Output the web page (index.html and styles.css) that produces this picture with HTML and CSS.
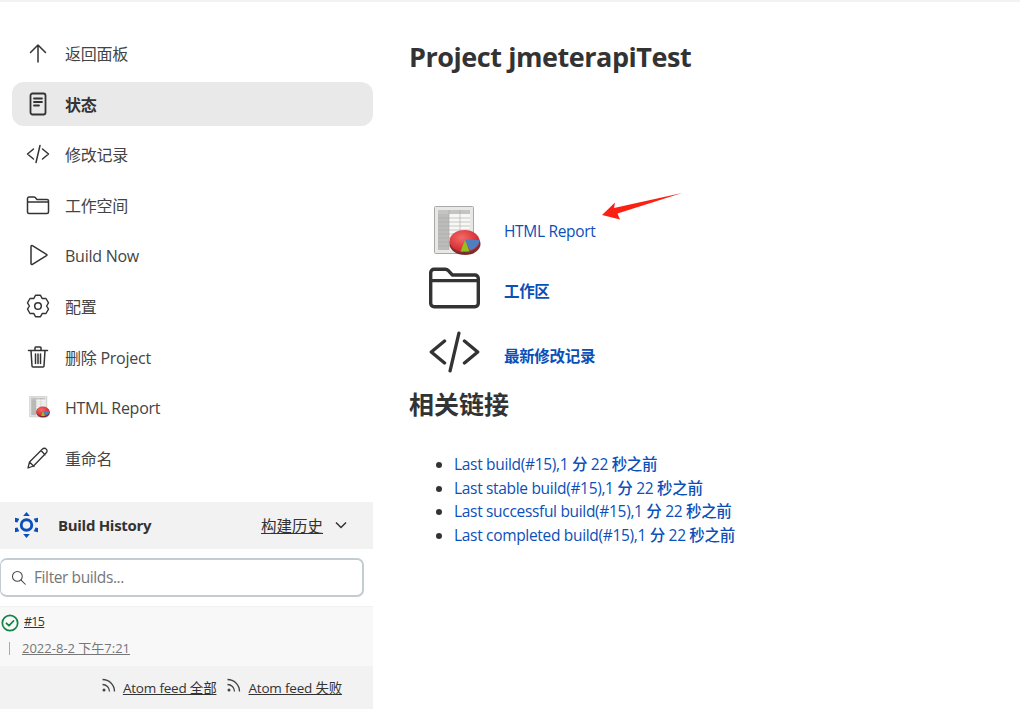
FILE: index.html
```html
<!DOCTYPE html>
<html lang="zh-CN">
<head>
    <meta charset="UTF-8">
    <title>jmeterapiTest [Jenkins]</title>
    <link rel="stylesheet" href="styles.css">
</head>
<body>
    <svg class="hidden-defs" width="0" height="0" aria-hidden="true">
        <defs>
            <radialGradient id="pie-red" cx="40%" cy="35%" r="70%">
                <stop offset="0" stop-color="#f26a6a"/>
                <stop offset="1" stop-color="#cf1f24"/>
            </radialGradient>
            <symbol id="report" viewBox="0 0 48 50">
                <rect x="0.500" y="0.500" width="39" height="47" rx="1" fill="#e8e8e6" stroke="#a9a9a7"/>
                <rect x="4" y="4" width="32" height="40" fill="#f7f7f5"/>
                <rect x="4" y="4" width="11" height="40" fill="#bcbcba"/>
                <rect x="4" y="4" width="32" height="4" fill="#c4c4c2"/>
                <g stroke="#aaaaa8" stroke-width=".6">
                    <path d="M4 12h32M4 16h32M4 20h32M4 24h32M4 28h32M4 32h32M4 36h32M4 40h32"/>
                    <path d="M15 4v40M26 4v40"/>
                </g>
                <ellipse cx="31" cy="38" rx="15.500" ry="11" fill="#6e1c1c" opacity=".9"/>
                <ellipse cx="30.500" cy="35" rx="15" ry="11" fill="url(#pie-red)"/>
                <path d="M31 34H45.500C45.500 39 41 43 36 44.500z" fill="#4f7fbe"/>
                <path d="M31 34l-4.500 11.500h9z" fill="#8fc31f"/>
            </symbol>
            <symbol id="folder" viewBox="0 0 24 24">
                <path d="M1.500 5.500A1.500 1.500 0 0 1 3 4h5c.5 0 .9.200 1.200.500L11 6.500h10A1.500 1.500 0 0 1 22.500 8v11a1.500 1.500 0 0 1-1.500 1.500H3A1.500 1.500 0 0 1 1.500 19zM1.500 9h21" fill="none" stroke="currentColor" stroke-width="1.500" stroke-linejoin="round"/>
            </symbol>
            <symbol id="code" viewBox="0 0 24 24">
                <path d="M7.500 7L1.500 12l6 5M16.500 7l6 5-6 5M14 3.500L10 20.500" fill="none" stroke="currentColor" stroke-width="1.500" stroke-linecap="round" stroke-linejoin="round"/>
            </symbol>
        </defs>
    </svg>

    <div class="page">
        <aside class="sidebar">
            <nav class="tasks">
                <a class="task">
                    <svg class="task-icon" viewBox="0 0 24 24"><path d="M12 21V4M4.500 11.500L12 4l7.500 7.500" fill="none" stroke="currentColor" stroke-width="1.500" stroke-linecap="round" stroke-linejoin="round"/></svg>
                    <span>返回面板</span>
                </a>
                <a class="task task-active">
                    <svg class="task-icon" viewBox="0 0 24 24"><rect x="4.500" y="1.500" width="15" height="21" rx="2" fill="none" stroke="currentColor" stroke-width="1.800"/><path d="M8 6.500h8M8 10h8M8 13.500h5" fill="none" stroke="currentColor" stroke-width="1.800" stroke-linecap="round"/></svg>
                    <span>状态</span>
                </a>
                <a class="task">
                    <svg class="task-icon" viewBox="0 0 24 24"><use href="#code"/></svg>
                    <span>修改记录</span>
                </a>
                <a class="task">
                    <svg class="task-icon" viewBox="0 0 24 24"><use href="#folder"/></svg>
                    <span>工作空间</span>
                </a>
                <a class="task task-latin">
                    <svg class="task-icon" viewBox="0 0 24 24"><path d="M5 3.500c0-.8.800-1.200 1.400-.8L20.500 11.300c.6.400.6 1 0 1.400L6.400 21.300c-.6.400-1.400 0-1.400-.8z" fill="none" stroke="currentColor" stroke-width="1.500" stroke-linejoin="round"/></svg>
                    <span>Build Now</span>
                </a>
                <a class="task">
                    <svg class="task-icon" viewBox="0 0 24 24"><circle cx="12" cy="12" r="3.300" fill="none" stroke="currentColor" stroke-width="1.500"/><path d="M9.500 1.300H14.500L16.300 4.550L20 4.500L22.500 8.800L20.600 12L22.500 15.200L20 19.500L16.300 19.450L14.500 22.700H9.500L7.700 19.450L4 19.500L1.500 15.200L3.400 12L1.500 8.800L4 4.500L7.700 4.550Z" fill="none" stroke="currentColor" stroke-width="1.400" stroke-linejoin="round"/></svg>
                    <span>配置</span>
                </a>
                <a class="task">
                    <svg class="task-icon" viewBox="0 0 24 24"><path d="M2.500 5.500h19M9 5.500V2.800c0-.5.400-.8.800-.8h4.400c.4 0 .8.300.8.800v2.700M5 5.500l1 15.500c0 .6.500 1 1 1h10c.5 0 1-.4 1-1l1-15.500M9.500 9v9.500M12 9v9.500M14.500 9v9.500" fill="none" stroke="currentColor" stroke-width="1.500" stroke-linecap="round" stroke-linejoin="round"/></svg>
                    <span>删除 Project</span>
                </a>
                <a class="task task-latin">
                    <svg class="task-icon task-icon-plain" viewBox="0 0 24 24"><use href="#report"/></svg>
                    <span>HTML Report</span>
                </a>
                <a class="task">
                    <svg class="task-icon" viewBox="0 0 24 24"><path d="M2 22l1.500-6L16.500 3c1-1 2.800-1 3.800.1 1 1 1 2.700 0 3.700L7.500 20zM3.500 16L8 20.500M15 4.500L19 8.800" fill="none" stroke="currentColor" stroke-width="1.300" stroke-linecap="round" stroke-linejoin="round"/></svg>
                    <span>重命名</span>
                </a>
            </nav>

            <section class="history">
                <div class="history-head">
                    <svg class="history-logo" viewBox="0 0 24 27">
                        <circle cx="12" cy="13.500" r="5.500" fill="none" stroke="#0b4fb8" stroke-width="3"/>
                        <path d="M12 0l3.500 4h-7zM12 27l-3.500-4h7zM0 6l4.500 1-2 4-2.500-.6zM24 6l-4.500 1 2 4 2.500-.6zM0 21l4.500-1-2-4-2.500.6zM24 21l-4.500-1 2-4 2.500.6z" fill="#0b4fb8"/>
                    </svg>
                    <span class="history-title">Build History</span>
                    <a class="history-link">构建历史</a>
                    <svg class="chevron" viewBox="0 0 14 14"><path d="M2 4.500L7 9.500l5-5" fill="none" stroke="currentColor" stroke-width="1.500"/></svg>
                </div>
                <div class="filter">
                    <svg class="filter-icon" viewBox="0 0 20 20"><circle cx="8.500" cy="8.500" r="6.500" fill="none" stroke="currentColor" stroke-width="1.400"/><path d="M13.500 13.500L19 19" stroke="currentColor" stroke-width="1.400" stroke-linecap="round"/></svg>
                    <span>Filter builds...</span>
                </div>
                <div class="build">
                    <div class="build-top">
                        <svg class="build-status" viewBox="0 0 18 18"><circle cx="9" cy="9" r="7.700" fill="none" stroke="#138347" stroke-width="1.700"/><path d="M5.500 9.300l2.500 2.400 4.500-4.700" fill="none" stroke="#138347" stroke-width="1.800" stroke-linecap="round" stroke-linejoin="round"/></svg>
                        <a class="build-num">#15</a>
                    </div>
                    <div class="build-bottom">
                        <a class="build-date">2022-8-2 下午7:21</a>
                    </div>
                </div>
                <div class="feeds">
                    <svg class="feed-icon" viewBox="0 0 16 16"><circle cx="3" cy="13" r="1.500" fill="currentColor"/><path d="M1.500 7.500a7 7 0 0 1 7 7M1.500 2.500a12 12 0 0 1 12 12" fill="none" stroke="currentColor" stroke-width="1.300"/></svg>
                    <a class="feed-link">Atom feed 全部</a>
                    <svg class="feed-icon feed-icon-second" viewBox="0 0 16 16"><circle cx="3" cy="13" r="1.500" fill="currentColor"/><path d="M1.500 7.500a7 7 0 0 1 7 7M1.500 2.500a12 12 0 0 1 12 12" fill="none" stroke="currentColor" stroke-width="1.300"/></svg>
                    <a class="feed-link">Atom feed 失败</a>
                </div>
            </section>
        </aside>

        <main class="content">
            <h1>Project jmeterapiTest</h1>

            <table class="permalinks">
                <tr class="row-report">
                    <td class="pic-cell"><svg class="pic-report"><use href="#report"/></svg></td>
                    <td><a class="link">HTML Report</a></td>
                </tr>
                <tr class="row-folder">
                    <td class="pic-cell"><svg class="pic" viewBox="0.750 3.250 22.500 18"><use href="#folder" width="24" height="24"/></svg></td>
                    <td><a class="link link-strong">工作区</a></td>
                </tr>
                <tr class="row-code">
                    <td class="pic-cell"><svg class="pic" viewBox="0.750 2.500 22.500 19"><use href="#code" width="24" height="24"/></svg></td>
                    <td><a class="link link-strong">最新修改记录</a></td>
                </tr>
            </table>

            <h2>相关链接</h2>
            <ul class="build-links">
                <li><a class="link">Last build(#15),1 分 22 秒之前</a></li>
                <li><a class="link">Last stable build(#15),1 分 22 秒之前</a></li>
                <li><a class="link">Last successful build(#15),1 分 22 秒之前</a></li>
                <li><a class="link">Last completed build(#15),1 分 22 秒之前</a></li>
            </ul>

            <!-- seta vermelha do print -->
            <svg class="arrow" viewBox="0 0 80 28"><path d="M80 1L12 16l1-5.500L0 23l18 4.500-2.500-6z" fill="#fb2012"/></svg>
        </main>
    </div>
</body>
</html>
```

FILE: styles.css
```css
body {
    margin: 0;
    height: 712px;
    overflow: hidden;
    background-color: #fff;
    color: #333;
    font-family: "Open Sans", "Noto Sans CJK SC", sans-serif;
    font-size: 16px;
    border-top: 2px solid #f2f2f2;
    box-sizing: border-box;
}

.hidden-defs {
    display: block;
    height: 0;
}

a {
    color: inherit;
}

.page {
    display: flex;
}

/* Sidebar */
.sidebar {
    width: 373px;
    flex-shrink: 0;
    padding-top: 29px;
}

.tasks {
    display: flex;
    flex-direction: column;
    gap: 6.6px;
    padding-left: 12px;
}

.task {
    display: flex;
    align-items: center;
    gap: 15px;
    height: 44px;
    padding-left: 14px;
    border-radius: 12px;
    color: #444;
    font-size: 16px;
    letter-spacing: -0.25px;
}

.task span {
    white-space: nowrap;
}

.task-latin span {
    padding-top: 2px;
}

.task-active {
    background-color: #e9e9e9;
    font-weight: 700;
    color: #333;
}

.task-icon {
    width: 24px;
    height: 24px;
    flex-shrink: 0;
    color: #333;
}

.task-icon-plain {
    width: 22px;
    margin: 0 -1px 0 3px;
}

/* Build history */
.history {
    margin-top: 22px;
}

.history-head {
    display: flex;
    align-items: center;
    height: 47px;
    padding-left: 15px;
    background-color: #f2f2f2;
}

.history-logo {
    width: 23px;
    height: 26px;
}

.history-title {
    margin-left: 20px;
    font-size: 15px;
    font-weight: 700;
    letter-spacing: -0.3px;
    color: #333;
}

.history-link {
    margin-left: auto;
    font-size: 15.5px;
    text-decoration: underline;
}

.chevron {
    width: 14px;
    height: 14px;
    margin: 0 25px 0 11px;
}

.filter {
    display: flex;
    align-items: center;
    gap: 8px;
    width: 364px;
    height: 39px;
    margin-top: 9px;
    padding-left: 10px;
    box-sizing: border-box;
    background-color: #fff;
    border: 2px solid #c3ccd1;
    border-left-width: 1px;
    border-radius: 7px;
    color: #777;
    font-size: 15.5px;
    letter-spacing: -0.4px;
}

.filter-icon {
    width: 15px;
    height: 15px;
    color: #444;
}

.build {
    height: 60px;
    margin-top: 9px;
    background-color: #f8f8f8;
    border-top: 1px solid #f1f1f1;
    box-sizing: border-box;
    font-size: 13px;
}

.build-top {
    display: flex;
    align-items: center;
    gap: 5px;
    padding: 7px 0 0 1px;
}

.build-status {
    width: 18px;
    height: 18px;
}

.build-num {
    text-decoration: underline;
    color: #333;
    font-size: 12.5px;
    letter-spacing: -0.7px;
    position: relative;
    top: -1px;
}

.build-bottom {
    margin: 10px 0 0 9px;
    padding-left: 12px;
    border-left: 1px solid #aaa;
    height: 13px;
    line-height: 13px;
}

.build-date {
    color: #777;
    text-decoration: underline;
    white-space: nowrap;
}

.feeds {
    display: flex;
    align-items: center;
    justify-content: flex-end;
    height: 43px;
    padding-right: 31px;
    background-color: #f2f2f2;
    font-size: 13.5px;
    letter-spacing: -0.2px;
}

.feed-icon {
    width: 16px;
    height: 16px;
    margin-right: 6px;
    color: #444;
    position: relative;
    top: -2px;
}

.feed-icon-second {
    margin-left: 10px;
}

.feed-link {
    text-decoration: underline;
    white-space: nowrap;
}

/* Main */
.content {
    flex: 1;
    position: relative;
    padding-left: 36px;
}

h1 {
    margin: 36px 0 0;
    font-size: 27px;
    line-height: 38px;
    font-weight: 700;
    letter-spacing: -0.45px;
    color: #333;
}

.permalinks {
    margin-top: 126px;
    margin-left: 16px;
    border-collapse: collapse;
}

.permalinks td {
    padding: 0;
    vertical-align: middle;
}

.pic-cell {
    width: 79px;
}

.row-report {
    height: 58px;
}

.row-folder {
    height: 61px;
}

.row-code {
    height: 68px;
}

.pic {
    display: block;
    width: 51px;
    height: 42px;
    margin: 0 0 6px 4px;
    color: #333;
}

.pic-report {
    display: block;
    width: 48px;
    height: 50px;
    margin-left: 9px;
}

.link {
    color: #0b4fb8;
    font-size: 15.5px;
    font-weight: 500;
    letter-spacing: -0.32px;
}

.link-strong {
    font-weight: 700;
    font-size: 15.5px;
}

h2 {
    margin: -2px 0 0;
    font-size: 25px;
    line-height: 34px;
    font-weight: 700;
    color: #333;
}

.build-links {
    margin: 32px 0 0;
    padding-left: 45px;
    line-height: 23.6px;
}

.build-links li {
    white-space: nowrap;
}

.arrow {
    position: absolute;
    left: 229px;
    top: 190px;
    width: 80px;
    height: 28px;
}
```
